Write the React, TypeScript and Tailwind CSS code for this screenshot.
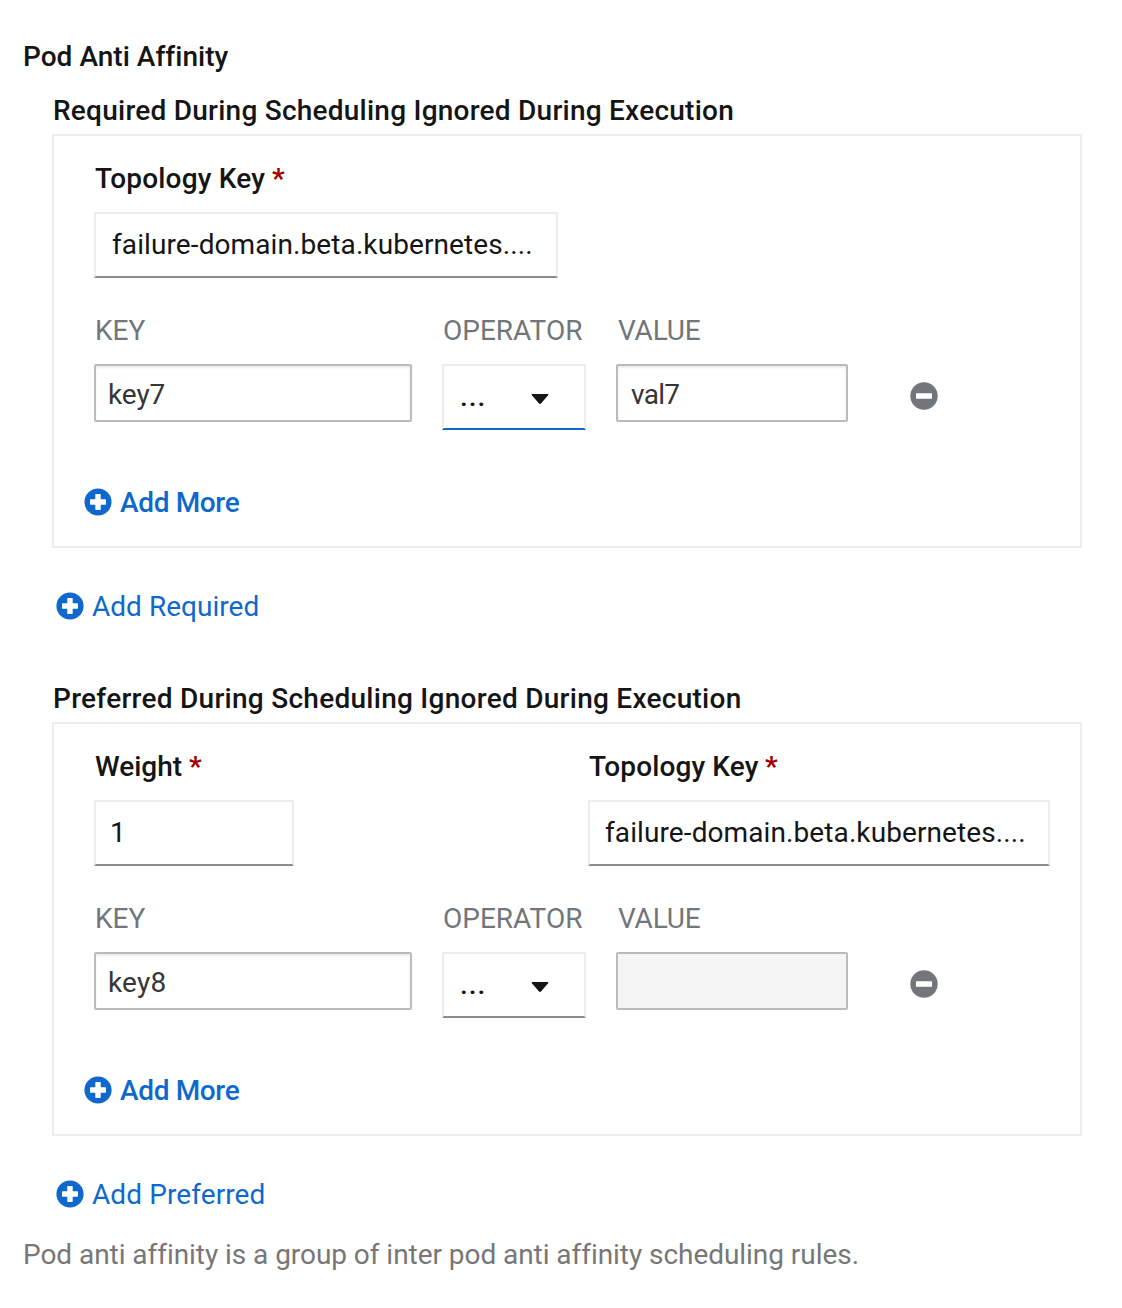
import type { ReactNode } from 'react';

function PlusCircle() {
  return (
    <svg viewBox="0 0 28 28" className="size-7 shrink-0">
      <circle cx="14" cy="14" r="13.6" fill="#0f69cc" />
      <path d="M12 6h4q.7 0 .7.7v4.6h4.6q.7 0 .7.7v4q0 .7-.7.7h-4.6v4.6q0 .7-.7.7h-4q-.7 0-.7-.7v-4.6H6.700q-.7 0-.7-.7v-4q0-.7.7-.7h4.600V6.700q0-.7.7-.7z" fill="#fff" />
    </svg>
  );
}

function MinusCircle() {
  return (
    <svg viewBox="0 0 28 28" className="size-7 shrink-0">
      <circle cx="14" cy="14" r="13.7" fill="#72767b" />
      <rect x="6" y="11.200" width="16" height="5.600" rx=".6" fill="#fff" />
    </svg>
  );
}

function SectionTitle({ children, className }: { children: ReactNode; className: string }) {
  return <h3 className={`ml-[52px] whitespace-nowrap pl-px font-medium ${className}`}>{children}</h3>;
}

function RequiredLabel({ children, className }: { children: ReactNode; className: string }) {
  return (
    <div className="flex pl-px font-medium">
      <span className={className}>{children}</span>
      <span className="font-bold text-[#a30000]">*</span>
    </div>
  );
}

function Box({ children, className }: { children: ReactNode; className: string }) {
  return (
    <div className={`flex h-[66px] border-2 border-[#ededed] ${className}`}>
      {children}
    </div>
  );
}

const inputBase = 'h-[58px] rounded-[2px] border-2 border-[#bbb] pt-0.5 text-[#363636] outline-none';

type RowProps = { keyName: string; keyClass: string; value?: string; focused?: boolean };

function ExpressionRow({ keyName, keyClass, value, focused }: RowProps) {
  return (
    <>
      <div className="mt-9 flex h-[33px] pl-px text-[#72767b]">
        <span className="w-[348px]">KEY</span>
        <span className="w-[175px]">OPERATOR</span>
        <span className="tracking-[-0.2px]">VALUE</span>
      </div>
      <div className="mt-[17px] flex items-start">
        <input
          readOnly
          value={keyName}
          className={`${inputBase} ${keyClass} w-[318px] pl-3 shadow-[inset_0_2px_2px_rgba(3,3,3,0.075)]`}
        />
        <Box className={`ml-[30px] w-36 pl-4 pt-[14px] ${focused ? 'border-b-[#0f69cc]' : 'border-b-[#8a8d90]'}`}>
          <span className="w-[71px] font-medium tracking-[1px]">...</span>
          <svg viewBox="0 0 18 10" className="mt-[14px] h-2.5 w-[18px]">
            <path d="M1.200 0h15.600q1 .3.3 1.300L10.200 9.300Q9 10.500 7.800 9.300L.9 1.300Q.2.3 1.200 0z" fill="#151515" />
          </svg>
        </Box>
        {value ? (
          <input
            readOnly
            value={value}
            className={`${inputBase} ml-[30px] w-[232px] pl-[13px] tracking-[-0.7px] shadow-[inset_0_2px_2px_rgba(3,3,3,0.075)]`}
          />
        ) : (
          <input disabled className={`${inputBase} ml-[30px] w-[232px] bg-[#f5f5f5]`} />
        )}
        <button className="ml-[62px] mt-[18px]">
          <MinusCircle />
        </button>
      </div>
      <button className="-ml-2.5 mt-14 flex h-[33px] text-[#0f69cc]">
        <span className="mt-0.5"><PlusCircle /></span>
        <span className="ml-2 font-medium tracking-[-0.35px]">Add More</span>
      </button>
    </>
  );
}

function AddLink({ children, className }: { children: ReactNode; className: string }) {
  return (
    <button className="ml-14 mt-[42px] flex h-[33px] text-[#0f69cc]">
      <span className="mt-0.5"><PlusCircle /></span>
      <span className={`ml-2 ${className}`}>{children}</span>
    </button>
  );
}

const card = 'ml-[52px] mt-[7px] h-[414px] w-[1030px] border-2 border-[#ededed] pl-10 pt-[26px]';

export default function App() {
  return (
    <main className="h-[1308px] w-[1122px] overflow-hidden bg-white pt-10 font-['Roboto',sans-serif] text-[28px] leading-[33px] text-[#151515]">
      <h2 className="ml-[22px] pl-px font-medium tracking-[0.02px]">Pod Anti Affinity</h2>

      <div className="mt-[21px]">
        <SectionTitle className="tracking-[0.24px]">
          Required During Scheduling Ignored During Execution
        </SectionTitle>
        <section className={card}>
          <RequiredLabel className="w-[177px] tracking-[0.16px]">Topology Key</RequiredLabel>
          <Box className="mt-[17px] w-[464px] border-b-[#8a8d90] pl-4 pt-[14px]">
            <span className="tracking-[0.1px]">failure-domain.beta.kubernetes....</span>
          </Box>
          <ExpressionRow keyName="key7" keyClass="tracking-[-0.1px]" value="val7" focused />
        </section>
        <AddLink className="tracking-[0.03px]">Add Required</AddLink>
      </div>

      <div className="mt-[59px]">
        <SectionTitle className="tracking-[0.27px]">
          Preferred During Scheduling Ignored During Execution
        </SectionTitle>
        <section className={card}>
          <div className="flex">
            <div className="w-[494px]">
              <RequiredLabel className="w-[94px]">Weight</RequiredLabel>
              <Box className="mt-[17px] w-[200px] border-b-[#8a8d90] pl-[14px] pt-[14px]">1</Box>
            </div>
            <div className="w-[462px]">
              <RequiredLabel className="w-[176px] tracking-[0.12px]">Topology Key</RequiredLabel>
              <Box className="mt-[17px] w-[462px] border-b-[#8a8d90] pl-[15px] pt-[14px]">
                <span className="tracking-[0.1px]">failure-domain.beta.kubernetes....</span>
              </Box>
            </div>
          </div>
          <ExpressionRow keyName="key8" keyClass="tracking-[0.2px]" />
        </section>
        <AddLink className="tracking-[0.1px]">Add Preferred</AddLink>
      </div>

      <p className="ml-[22px] mt-[27px] whitespace-nowrap pl-px tracking-[-0.05px] text-[#777]">
        Pod anti affinity is a group of inter pod anti affinity scheduling rules.
      </p>
    </main>
  );
}
